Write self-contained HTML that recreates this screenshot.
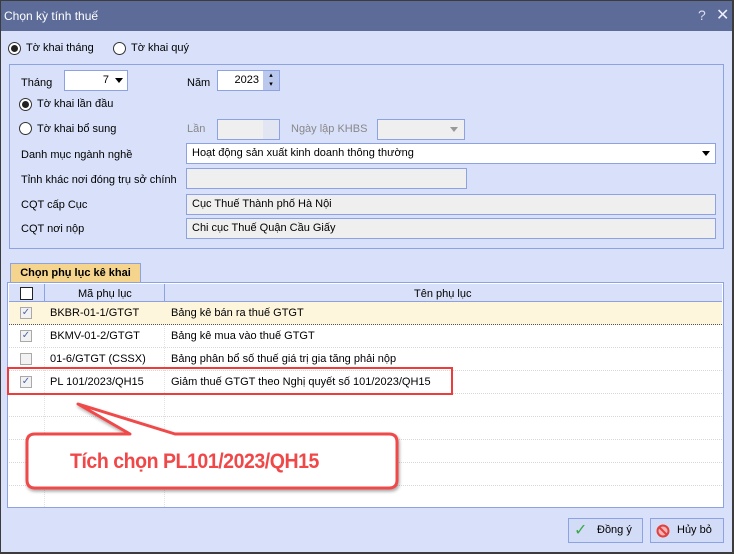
<!DOCTYPE html>
<html><head><meta charset="utf-8"><style>
*{box-sizing:border-box;margin:0;padding:0}
body{width:734px;height:554px;overflow:hidden;background:#3c3c3c;font-family:"Liberation Sans",sans-serif;font-size:11px;color:#000;position:relative}
.a{position:absolute}
#win{left:1px;top:1px;width:731px;height:551px;background:#d9e1fa}
#title{left:1px;top:1px;width:731px;height:30px;background:#5d6b99;color:#fff;font-size:12px;line-height:30px;padding-left:3px}
.box{position:absolute;border:1px solid #8da2e3;background:#fff;height:21px;line-height:19px;padding-left:5px;font-size:11px}
.dis{background:#efefef}
.rad{position:absolute;width:13px;height:13px;border:1px solid #333;border-radius:50%;background:#fff}
.rad.on::after{content:"";position:absolute;left:2px;top:2px;width:7px;height:7px;border-radius:50%;background:#222}
.tri{position:absolute;width:0;height:0;border-left:4px solid transparent;border-right:4px solid transparent;border-top:5px solid #000}
.row{position:absolute;left:9px;width:713px;height:23px;border-bottom:1px dotted #d8d8d8;line-height:22px}
.cb{position:absolute;left:11px;top:5px;width:12px;height:12px;border:1px solid #a9a9a9;background:#f2f2f2;font-size:10px;line-height:10px;text-align:center;color:#4b66a8}
.btn{position:absolute;top:518px;height:25px;border:1px solid #8da2e3;background:#d3dcf7;line-height:23px}
</style></head><body>
<div id="win" class="a"></div>
<div id="title" class="a">Chọn kỳ tính thuế</div>
<div class="a" style="left:698px;top:7px;color:#dde;font-size:14px">?</div>
<div class="a" style="left:716px;top:5px;color:#eef;font-size:16px">✕</div>

<div class="rad on" style="left:8px;top:42px"></div><div class="a" style="left:26px;top:42px">Tờ khai tháng</div>
<div class="rad" style="left:113px;top:42px"></div><div class="a" style="left:131px;top:42px">Tờ khai quý</div>

<div class="a" style="left:9px;top:64px;width:715px;height:185px;border:1px solid #8da2e3"></div>
<div class="a" style="left:21px;top:77px">Tháng</div>
<div class="box" style="left:64px;top:70px;width:64px;text-align:right;padding-right:18px">7</div><div class="tri" style="left:115px;top:78px"></div>
<div class="a" style="left:187px;top:77px">Năm</div>
<div class="box" style="left:217px;top:70px;width:63px;text-align:right;padding-right:20px">2023</div>
<div class="a" style="left:263px;top:71px;width:16px;height:19px;background:#b9c8ec;font-size:7px;text-align:center;line-height:9px">▴<br>▾</div>
<div class="rad on" style="left:19px;top:98px"></div><div class="a" style="left:37px;top:98px">Tờ khai lần đầu</div>
<div class="rad" style="left:19px;top:122px"></div><div class="a" style="left:37px;top:123px">Tờ khai bổ sung</div>
<div class="a" style="left:187px;top:123px;color:#888">Lần</div>
<div class="box dis" style="left:217px;top:119px;width:63px"></div>
<div class="a" style="left:263px;top:120px;width:16px;height:19px;background:#e2e6f2"></div>
<div class="a" style="left:291px;top:123px;color:#888">Ngày lập KHBS</div>
<div class="box dis" style="left:377px;top:119px;width:88px"></div><div class="tri" style="left:450px;top:127px;border-top-color:#999"></div>
<div class="a" style="left:21px;top:149px">Danh mục ngành nghề</div>
<div class="box" style="left:186px;top:143px;width:530px">Hoạt động sản xuất kinh doanh thông thường</div><div class="tri" style="left:702px;top:151px"></div>
<div class="a" style="left:21px;top:174px">Tỉnh khác nơi đóng trụ sở chính</div>
<div class="box dis" style="left:186px;top:168px;width:281px"></div>
<div class="a" style="left:21px;top:199px">CQT cấp Cục</div>
<div class="box dis" style="left:186px;top:194px;width:530px">Cục Thuế Thành phố Hà Nội</div>
<div class="a" style="left:21px;top:223px">CQT nơi nộp</div>
<div class="box dis" style="left:186px;top:218px;width:530px">Chi cục Thuế Quận Cầu Giấy</div>

<div class="a" style="left:10px;top:263px;width:131px;height:20px;background:#f5d48e;border:1px solid #8da2e3;border-bottom:none;text-align:center;line-height:19px;font-size:11px;font-weight:bold">Chọn phụ lục kê khai</div>
<div class="a" style="left:7px;top:282px;width:717px;height:226px;border:1px solid #8da2e3;background:#fff"></div>
<div class="a" style="left:9px;top:284px;width:713px;height:18px;background:#d9e1fa;border-bottom:1px solid #8da2e3"></div>
<div class="a" style="left:44px;top:284px;width:1px;height:18px;background:#8da2e3"></div>
<div class="a" style="left:164px;top:284px;width:1px;height:18px;background:#8da2e3"></div>
<div class="a" style="left:20px;top:287px;width:13px;height:13px;border:1px solid #222;background:#fff"></div>
<div class="a" style="left:78px;top:288px">Mã phụ lục</div>
<div class="a" style="left:414px;top:288px">Tên phụ lục</div>
<div class="a" style="left:44px;top:302px;width:1px;height:205px;border-left:1px dotted #e2e2e2"></div>
<div class="a" style="left:164px;top:302px;width:1px;height:205px;border-left:1px dotted #e2e2e2"></div>
<div class="row" style="top:302px;background:#fdf5dc;border-bottom:1px dotted #555"><div class="cb">✓</div><span class="a" style="left:41px">BKBR-01-1/GTGT</span><span class="a" style="left:162px">Bảng kê bán ra thuế GTGT</span></div>
<div class="row" style="top:325px"><div class="cb">✓</div><span class="a" style="left:41px">BKMV-01-2/GTGT</span><span class="a" style="left:162px">Bảng kê mua vào thuế GTGT</span></div>
<div class="row" style="top:348px"><div class="cb"></div><span class="a" style="left:41px">01-6/GTGT (CSSX)</span><span class="a" style="left:162px">Bảng phân bổ số thuế giá trị gia tăng phải nộp</span></div>
<div class="row" style="top:371px"><div class="cb">✓</div><span class="a" style="left:41px">PL 101/2023/QH15</span><span class="a" style="left:162px">Giảm thuế GTGT theo Nghị quyết số 101/2023/QH15</span></div>
<div class="row" style="top:394px"></div><div class="row" style="top:417px"></div><div class="row" style="top:440px"></div><div class="row" style="top:463px"></div>
<div class="a" style="left:7px;top:367px;width:446px;height:28px;border:2px solid #ee3b3b"></div>

<svg class="a" style="left:0;top:0" width="734" height="554">
<defs><filter id="s" x="-10%" y="-10%" width="120%" height="130%"><feDropShadow dx="1" dy="2" stdDeviation="1.5" flood-opacity=".35"/></filter></defs>
<path d="M35,434 L130,434 L78,404 L175,434 L389,434 Q397,434 397,442 L397,480 Q397,488 389,488 L35,488 Q27,488 27,480 L27,442 Q27,434 35,434 Z" fill="#fff" stroke="#f04848" stroke-width="3" stroke-linejoin="round" filter="url(#s)"/>
</svg>
<div class="a" style="left:70px;top:450px;color:#f04848;font-weight:bold;font-size:21px;letter-spacing:-0.5px;transform:scaleX(.93);transform-origin:left">Tích chọn PL101/2023/QH15</div>

<div class="btn" style="left:568px;width:75px"><span class="a" style="left:5px;top:0;color:#3aa94a;font-size:16px">✓</span><span class="a" style="left:28px">Đồng ý</span></div>
<div class="btn" style="left:650px;width:74px"><svg class="a" style="left:5px;top:5px" width="14" height="14"><circle cx="7" cy="7" r="5.5" fill="#f5b5b5" stroke="#e04040" stroke-width="2"/><path d="M3,3 L11,11" stroke="#e04040" stroke-width="2"/></svg><span class="a" style="left:26px">Hủy bỏ</span></div>
</body></html>
